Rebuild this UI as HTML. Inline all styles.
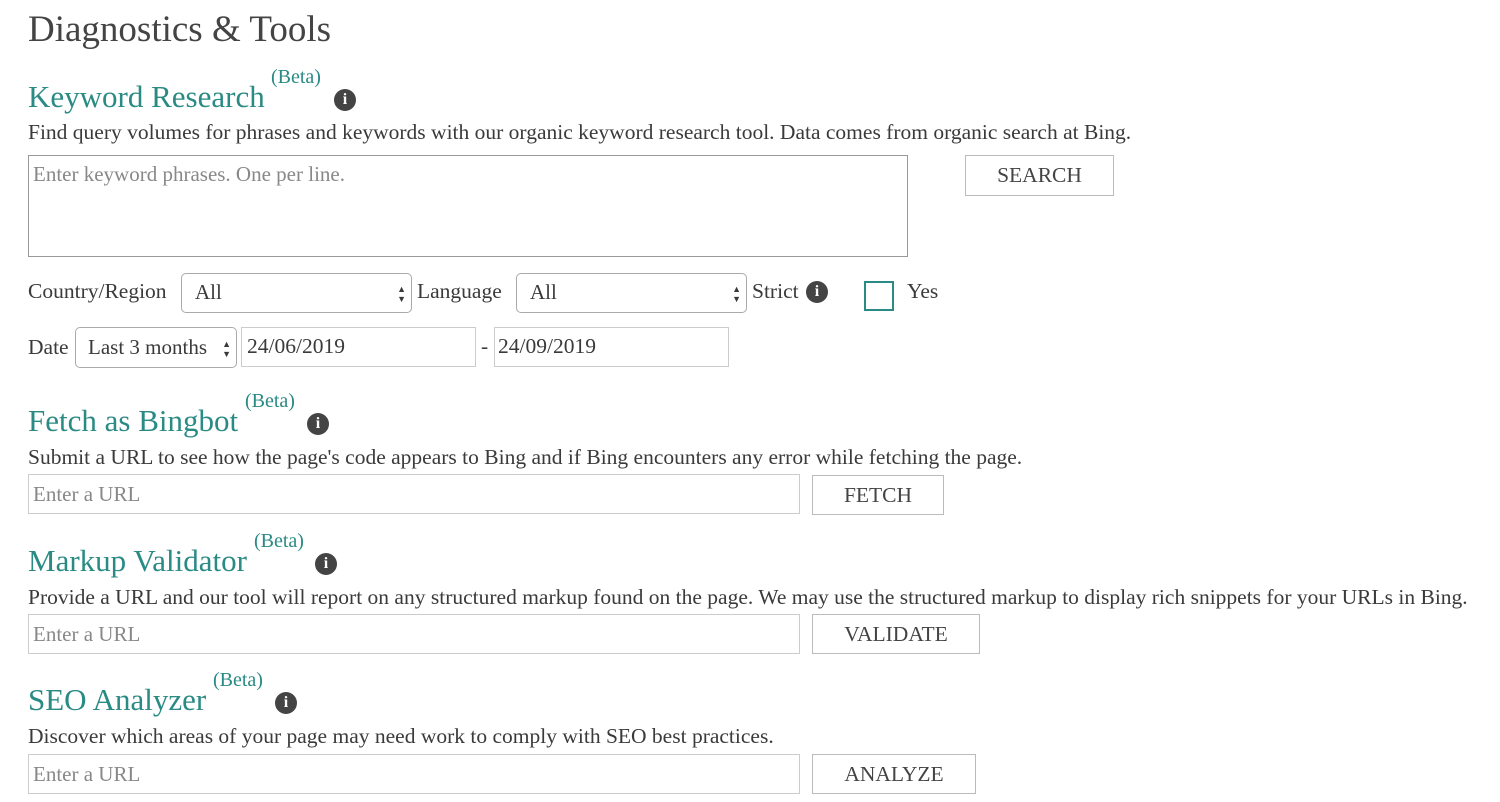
<!DOCTYPE html>
<html><head><style>
body{margin:0;width:1500px;height:802px;background:#fff;font-family:"Liberation Serif",serif;color:#3a3a3a;position:relative;overflow:hidden}
.a{position:absolute;white-space:nowrap;line-height:1.15}
.h1{font-size:37px;color:#444}
.h2{font-size:31px;color:#2a8a84}
.beta{font-size:20px;color:#2a8a84}
.p{font-size:21.5px}
.box{position:absolute;border:1px solid #ccc;box-sizing:border-box;background:#fff}
.ph{color:#888;font-size:21px;padding:0 4px;line-height:1.15}
.btn{position:absolute;border:1px solid #bbb;box-sizing:border-box;font-size:21.5px;text-align:center;color:#444}
.sel{position:absolute;border:1px solid #aaa;border-radius:5px;box-sizing:border-box;font-size:21px;background:#fff}
.sel .ar{position:absolute;right:5px;top:10px;font-size:9px;line-height:10px}
.info{position:absolute;width:22px;height:22px;border-radius:50%;background:#444;color:#fff;font:bold 16px "Liberation Serif",serif;text-align:center;line-height:22px}
</style></head><body>
<div class="a h1" style="left:28px;top:9px">Diagnostics &amp; Tools</div>

<div class="a h2" style="left:28px;top:79px">Keyword Research</div>
<div class="a beta" style="left:271px;top:66px">(Beta)</div>
<div class="info" style="left:334px;top:89px">i</div>
<div class="a p" style="left:28px;top:120px">Find query volumes for phrases and keywords with our organic keyword research tool. Data comes from organic search at Bing.</div>
<div class="box" style="left:28px;top:155px;width:880px;height:102px;border-color:#999"><div class="ph" style="padding-top:6px">Enter keyword phrases. One per line.</div></div>
<div class="btn" style="left:965px;top:155px;width:149px;height:41px;line-height:39px">SEARCH</div>

<div class="a p" style="left:28px;top:279px">Country/Region</div>
<div class="sel" style="left:181px;top:273px;width:231px;height:40px"><span class="a" style="left:13px;top:6px">All</span><span class="ar">▲<br>▼</span></div>
<div class="a p" style="left:417px;top:279px">Language</div>
<div class="sel" style="left:516px;top:273px;width:231px;height:40px"><span class="a" style="left:13px;top:6px">All</span><span class="ar">▲<br>▼</span></div>
<div class="a p" style="left:752px;top:279px">Strict</div>
<div class="info" style="left:806px;top:281px">i</div>
<div class="a" style="left:864px;top:281px;width:30px;height:30px;border:2px solid #2a8a84;box-sizing:border-box"></div>
<div class="a p" style="left:907px;top:279px">Yes</div>

<div class="a p" style="left:28px;top:335px">Date</div>
<div class="sel" style="left:75px;top:327px;width:162px;height:41px"><span class="a" style="left:12px;top:7px">Last 3 months</span><span class="ar" style="top:11px">▲<br>▼</span></div>
<div class="box" style="left:241px;top:327px;width:235px;height:40px"><span class="a p" style="left:5px;top:6px">24/06/2019</span></div>
<div class="a p" style="left:481px;top:334px">-</div>
<div class="box" style="left:494px;top:327px;width:235px;height:40px"><span class="a p" style="left:3px;top:6px">24/09/2019</span></div>

<div class="a h2" style="left:28px;top:403px">Fetch as Bingbot</div>
<div class="a beta" style="left:245px;top:390px">(Beta)</div>
<div class="info" style="left:307px;top:413px">i</div>
<div class="a p" style="left:28px;top:445px">Submit a URL to see how the page's code appears to Bing and if Bing encounters any error while fetching the page.</div>
<div class="box" style="left:28px;top:474px;width:772px;height:40px"><div class="ph" style="padding-top:7px">Enter a URL</div></div>
<div class="btn" style="left:812px;top:475px;width:132px;height:40px;line-height:38px">FETCH</div>

<div class="a h2" style="left:28px;top:543px">Markup Validator</div>
<div class="a beta" style="left:254px;top:530px">(Beta)</div>
<div class="info" style="left:315px;top:553px">i</div>
<div class="a p" style="left:28px;top:585px">Provide a URL and our tool will report on any structured markup found on the page. We may use the structured markup to display rich snippets for your URLs in Bing.</div>
<div class="box" style="left:28px;top:614px;width:772px;height:40px"><div class="ph" style="padding-top:7px">Enter a URL</div></div>
<div class="btn" style="left:812px;top:614px;width:168px;height:40px;line-height:38px">VALIDATE</div>

<div class="a h2" style="left:28px;top:682px">SEO Analyzer</div>
<div class="a beta" style="left:213px;top:669px">(Beta)</div>
<div class="info" style="left:275px;top:692px">i</div>
<div class="a p" style="left:28px;top:724px">Discover which areas of your page may need work to comply with SEO best practices.</div>
<div class="box" style="left:28px;top:754px;width:772px;height:40px"><div class="ph" style="padding-top:7px">Enter a URL</div></div>
<div class="btn" style="left:812px;top:754px;width:164px;height:40px;line-height:38px">ANALYZE</div>
</body></html>
